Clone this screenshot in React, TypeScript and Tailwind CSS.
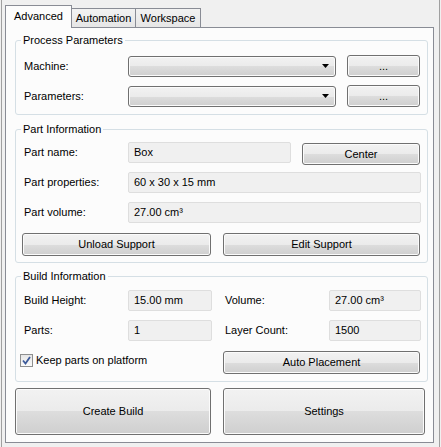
import React from "react";

const font = { fontFamily: '"Liberation Sans", Arial, sans-serif' };

const btn =
  "flex items-center justify-center rounded-[3px] border border-[#707070] bg-[linear-gradient(to_bottom,#f2f2f2_0%,#ebebeb_50%,#dddddd_50%,#cfcfcf_100%)] shadow-[inset_0_0_0_1px_#fbfbfb] text-[11px] text-black";

const field =
  "flex items-center h-[21px] rounded-[2px] border border-[#dedede] bg-[#f0f0f0] pl-[5px] text-[11px] text-black";

function Combo() {
  return (
    <div className={`${btn} w-[208px] h-[21px] justify-end pr-[6px]`}>
      <svg width="7" height="4" viewBox="0 0 7 4">
        <path d="M0 0 H7 L3.5 4 Z" fill="#000" />
      </svg>
    </div>
  );
}

function Group({
  title,
  className,
  children,
}: {
  title: string;
  className: string;
  children: React.ReactNode;
}) {
  return (
    <fieldset
      className={`w-[413px] rounded-[3px] border border-[#d5dfe5] ${className}`}
    >
      <legend className="ml-[5px] px-[2px] text-[11px] leading-[13px] text-black">
        {title}
      </legend>
      {children}
    </fieldset>
  );
}

function Label({ children, w = "w-[104px]" }: { children: React.ReactNode; w?: string }) {
  return <div className={`${w} shrink-0 text-[11px] text-black`}>{children}</div>;
}

export default function App() {
  return (
    <div style={font} className="w-[441px] h-[447px] bg-[#f0f0f0] overflow-hidden">
      <div className="ml-[1px] w-[439px] h-[447px] border-l border-r border-[#a0a0a0] pl-[3px]">
        {/* Tabs */}
        <div className="flex items-end h-[27px]">
          <div className="relative z-10 -mb-px flex h-[23px] w-[67px] items-center justify-center border border-b-0 border-[#898c95] bg-[#fcfcfc] pb-[2px] text-[11px] text-black">
            Advanced
          </div>
          <div className="-ml-px flex h-[19px] w-[65px] items-center justify-center border border-b-0 border-[#898c95] bg-[linear-gradient(to_bottom,#f2f2f2,#e6e6e6)] text-[11px] text-black">
            Automation
          </div>
          <div className="-ml-px flex h-[19px] w-[66px] items-center justify-center border border-b-0 border-[#898c95] bg-[linear-gradient(to_bottom,#f2f2f2,#e6e6e6)] text-[11px] text-black">
            Workspace
          </div>
        </div>

        {/* Pane */}
        <div className="flex h-[416px] w-[429px] flex-col border border-[#898c95] bg-[#fcfcfc] pl-[9px] pr-[5px]">
          <Group title="Process Parameters" className="mt-[6px]">
            <div className="pl-[8px] pt-[8px] pb-[7px]">
              <div className="flex h-[22px] items-center">
                <Label>Machine:</Label>
                <Combo />
                <div className={`${btn} ml-[11px] h-[22px] w-[73px]`}>...</div>
              </div>
              <div className="mt-[8px] flex h-[22px] items-center">
                <Label>Parameters:</Label>
                <Combo />
                <div className={`${btn} ml-[11px] h-[22px] w-[73px]`}>...</div>
              </div>
            </div>
          </Group>

          <Group title="Part Information" className="mt-[8px]">
            <div className="pl-[8px] pt-[6px] pb-[6px]">
              <div className="flex h-[23px] items-start">
                <div className="flex h-[21px] items-center">
                  <Label>Part name:</Label>
                </div>
                <div className={`${field} w-[163px]`}>Box</div>
                <div className={`${btn} ml-[11px] mt-[1px] h-[22px] w-[118px]`}>Center</div>
              </div>
              <div className="mt-[7px] flex h-[21px] items-center">
                <Label>Part properties:</Label>
                <div className={`${field} w-[293px]`}>60 x 30 x 15 mm</div>
              </div>
              <div className="mt-[9px] flex h-[21px] items-center">
                <Label>Part volume:</Label>
                <div className={`${field} w-[293px]`}>27.00 cm³</div>
              </div>
              <div className="-ml-[2px] mt-[10px] flex h-[23px] items-center">
                <div className={`${btn} h-[23px] w-[189px]`}>Unload Support</div>
                <div className={`${btn} ml-[12px] h-[23px] w-[197px]`}>Edit Support</div>
              </div>
            </div>
          </Group>

          <Group title="Build Information" className="mt-[7px]">
            <div className="pl-[8px] pt-[7px] pb-[7px]">
              <div className="flex h-[21px] items-center">
                <Label>Build Height:</Label>
                <div className={`${field} w-[84px]`}>15.00 mm</div>
                <div className="ml-[13px]">
                  <Label>Volume:</Label>
                </div>
                <div className={`${field} w-[92px]`}>27.00 cm³</div>
              </div>
              <div className="mt-[9px] flex h-[21px] items-center">
                <Label>Parts:</Label>
                <div className={`${field} w-[84px]`}>1</div>
                <div className="ml-[13px]">
                  <Label>Layer Count:</Label>
                </div>
                <div className={`${field} w-[92px]`}>1500</div>
              </div>
              <div className="-ml-[4px] mt-[10px] flex h-[23px] items-start">
                <div className="flex w-[203px] items-center pt-[3px]">
                  <div className="flex h-[13px] w-[13px] items-center justify-center border border-[#8e8f8f] bg-[linear-gradient(to_bottom,#e6e6e6,#fafafa)]">
                    <svg width="9" height="9" viewBox="0 0 9 9">
                      <path
                        d="M1 4.5 L3.5 7.5 L8 1"
                        fill="none"
                        stroke="#3c5a9a"
                        strokeWidth="1.8"
                      />
                    </svg>
                  </div>
                  <span className="ml-[3px] text-[11px] leading-[13px] text-black">
                    Keep parts on platform
                  </span>
                </div>
                <div className={`${btn} h-[23px] w-[197px]`}>Auto Placement</div>
              </div>
            </div>
          </Group>

          <div className="mt-[6px] flex">
            <div className={`${btn} h-[47px] w-[196px]`}>Create Build</div>
            <div className={`${btn} ml-[12px] h-[47px] w-[202px]`}>Settings</div>
          </div>
        </div>
      </div>
    </div>
  );
}
